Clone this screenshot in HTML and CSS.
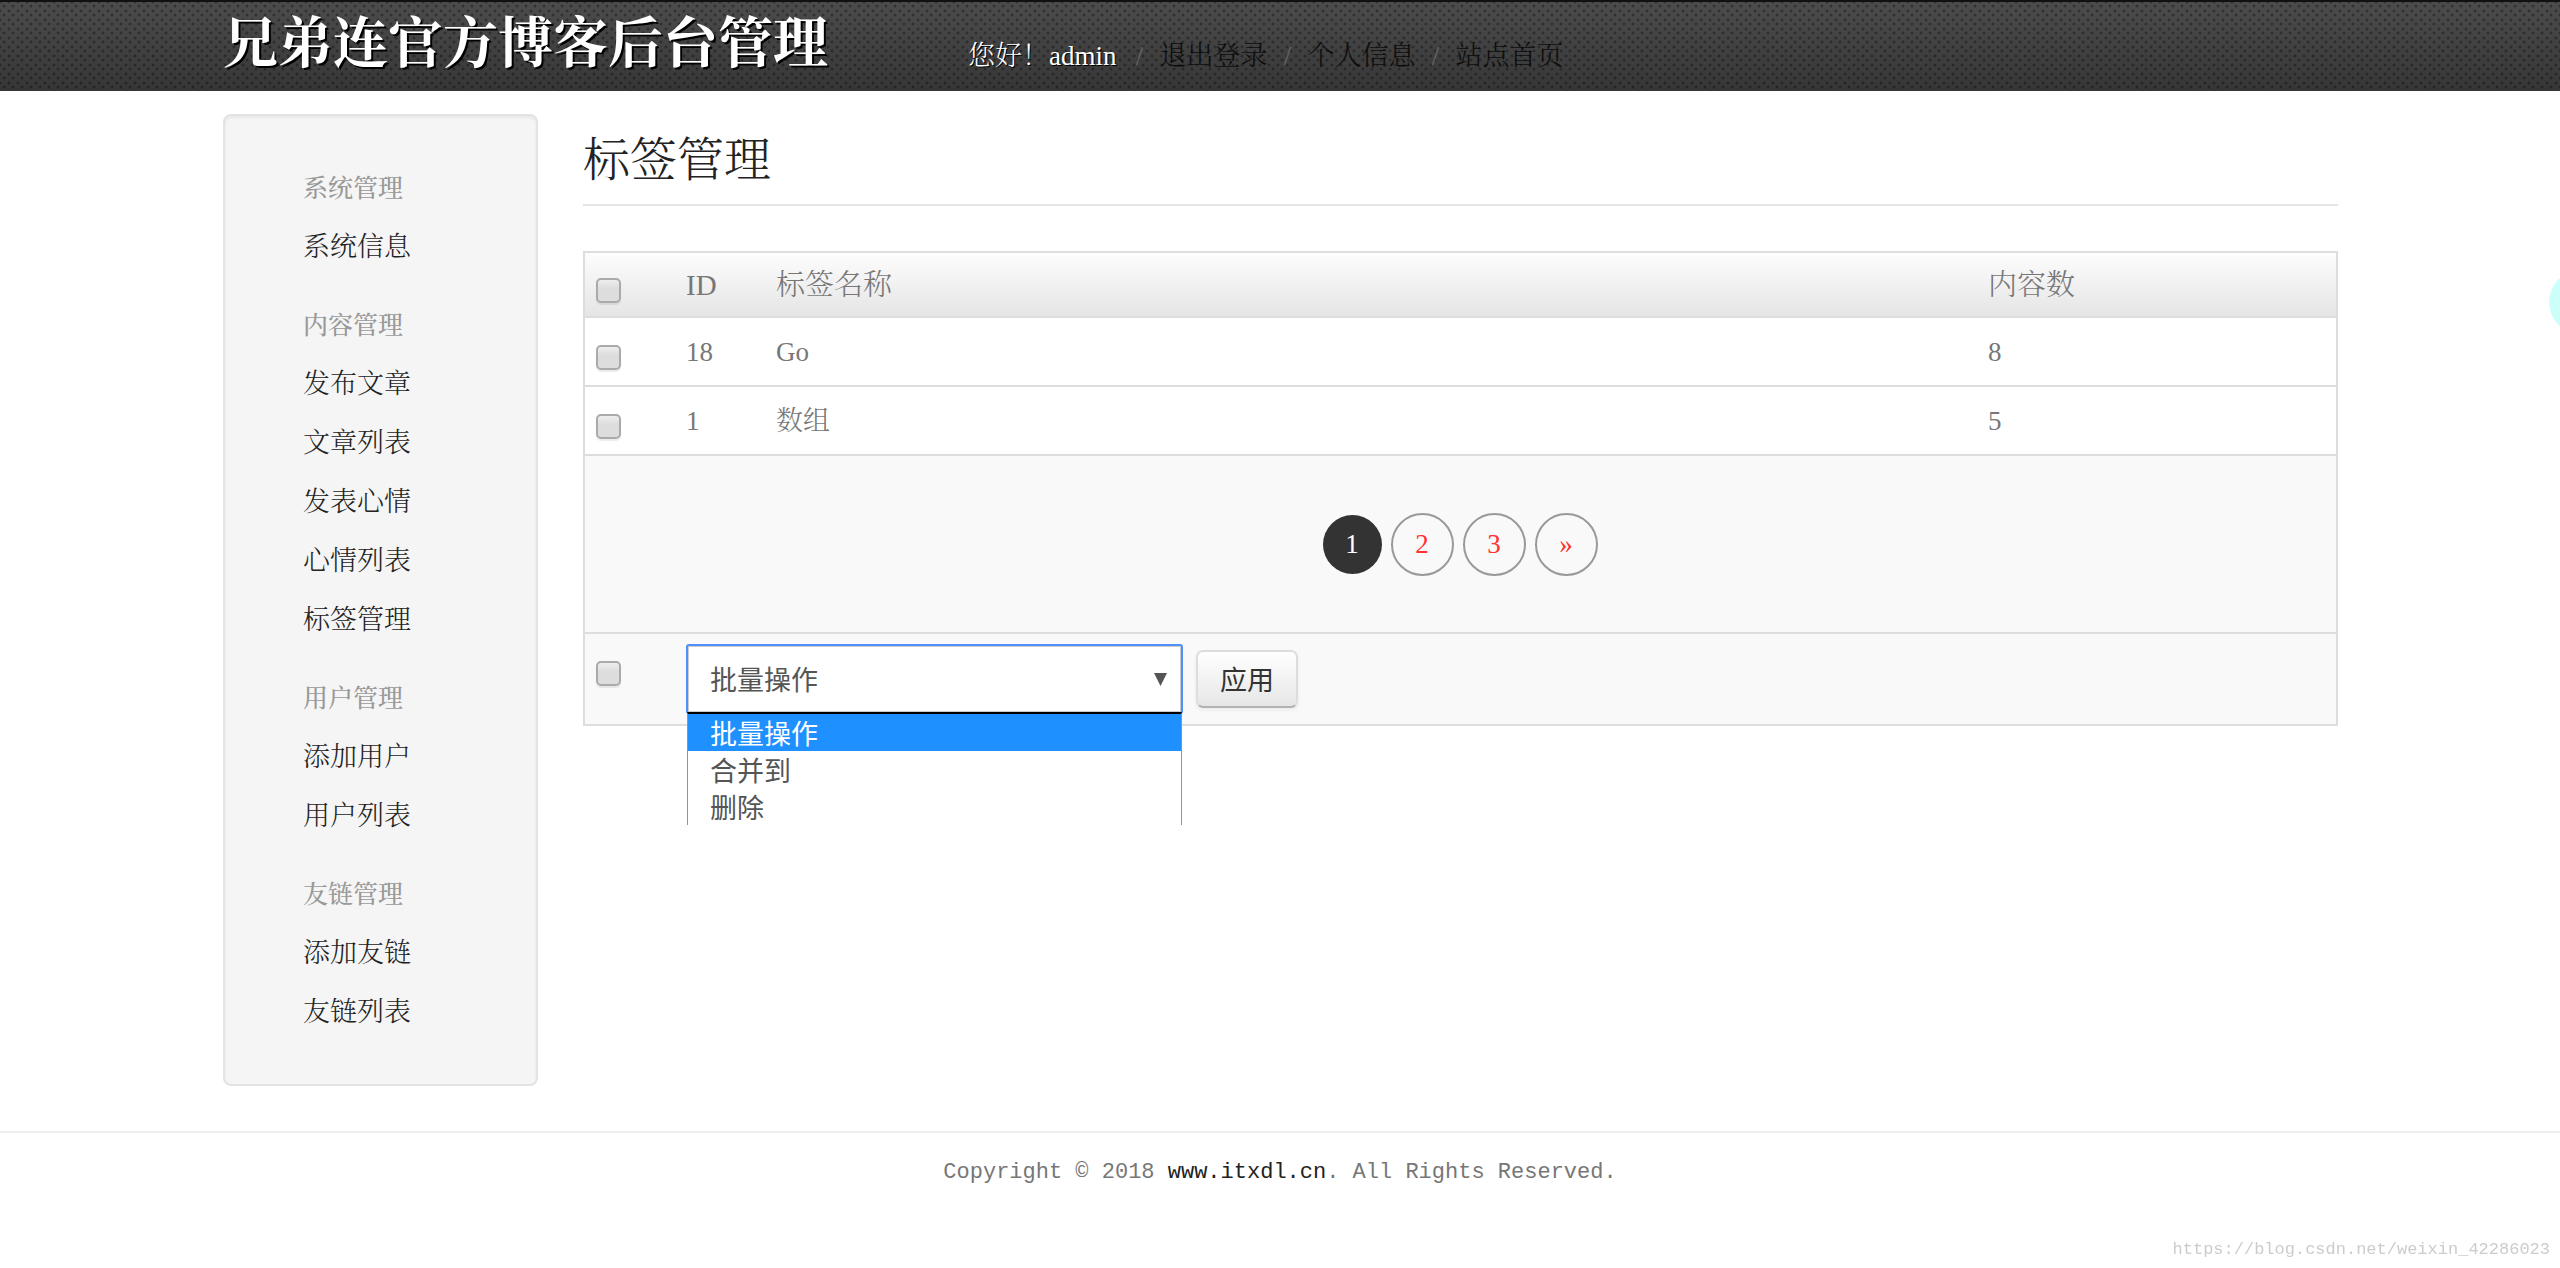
FILE: index.html
```html
<!DOCTYPE html>
<html lang="zh-CN">
<head>
<meta charset="utf-8">
<title>标签管理</title>
<link rel="stylesheet" href="styles.css">
</head>
<body>
<header class="topbar">
  <div class="container topbar-inner">
    <a class="brand" href="#">兄弟连官方博客后台管理</a>
    <ul class="user-nav">
      <li class="hello">您好！admin</li>
      <li><a href="#">退出登录</a></li>
      <li><a href="#">个人信息</a></li>
      <li><a href="#">站点首页</a></li>
    </ul>
  </div>
</header>

<div class="container layout">
  <nav class="sidebar">
    <h2>系统管理</h2>
    <ul>
      <li><a href="#">系统信息</a></li>
    </ul>
    <h2>内容管理</h2>
    <ul>
      <li><a href="#">发布文章</a></li>
      <li><a href="#">文章列表</a></li>
      <li><a href="#">发表心情</a></li>
      <li><a href="#">心情列表</a></li>
      <li><a href="#">标签管理</a></li>
    </ul>
    <h2>用户管理</h2>
    <ul>
      <li><a href="#">添加用户</a></li>
      <li><a href="#">用户列表</a></li>
    </ul>
    <h2>友链管理</h2>
    <ul>
      <li><a href="#">添加友链</a></li>
      <li><a href="#">友链列表</a></li>
    </ul>
  </nav>

  <main class="content">
    <h1>标签管理</h1>
    <table class="tags">
      <thead>
        <tr>
          <th class="col-check"><input type="checkbox" class="check" aria-label="全选"></th>
          <th class="col-id">ID</th>
          <th>标签名称</th>
          <th class="col-count">内容数</th>
        </tr>
      </thead>
      <tbody>
        <tr>
          <td><input type="checkbox" class="check" aria-label="选择 Go"></td>
          <td>18</td>
          <td>Go</td>
          <td>8</td>
        </tr>
        <tr>
          <td><input type="checkbox" class="check" aria-label="选择 数组"></td>
          <td>1</td>
          <td>数组</td>
          <td>5</td>
        </tr>
      </tbody>
      <tfoot>
        <tr class="pager-row">
          <td colspan="4">
            <div class="pager">
              <span class="page current">1</span>
              <a class="page" href="#">2</a>
              <a class="page" href="#">3</a>
              <a class="page" href="#">»</a>
            </div>
          </td>
        </tr>
        <tr class="bulk-row">
          <td><input type="checkbox" class="check" aria-label="全选"></td>
          <td colspan="3">
            <form class="bulk">
              <div class="picker">
                <select class="picker-select" aria-label="批量操作">
                  <option>批量操作</option>
                  <option>合并到</option>
                  <option>删除</option>
                </select>
                <ul class="picker-list">
                  <li class="active">批量操作</li>
                  <li>合并到</li>
                  <li>删除</li>
                </ul>
              </div>
              <button type="button" class="btn">应用</button>
            </form>
          </td>
        </tr>
      </tfoot>
    </table>
  </main>
</div>

<footer class="footer">
  <p>Copyright © 2018 <a href="#">www.itxdl.cn</a>. All Rights Reserved.</p>
</footer>

<div class="bubble"></div>
<div class="watermark">https://blog.csdn.net/weixin_42286023</div>
</body>
</html>
```
FILE: styles.css
```css
* { box-sizing: border-box; }

body {
  margin: 0;
  background: #fff;
  color: #777;
  font: 300 27px/36px "Liberation Serif", "Noto Serif CJK SC", "Noto Sans CJK SC", serif;
}

a { color: #222; text-decoration: none; }
ul { margin: 0; padding: 0; list-style: none; }

.container { margin: 0 222px 0 223px; }

/* top bar */
.topbar {
  border-top: 2px solid #111;
  background:
    radial-gradient(circle at 4px 4px, rgba(0, 0, 0, .5) 0, rgba(0, 0, 0, 0) 2px) 0 0 / 9px 9px,
    radial-gradient(circle at 4px 4px, rgba(0, 0, 0, .5) 0, rgba(0, 0, 0, 0) 2px) 5px 5px / 9px 9px,
    linear-gradient(#4c4c4c, #363636);
}
.topbar-inner { display: flex; gap: 140px; height: 89px; }
.brand {
  color: #fff;
  font-size: 55px;
  font-weight: 700;
  line-height: 84px;
  text-shadow: 2px 2px 0 #000;
}
.user-nav { display: flex; padding-top: 36px; }
.user-nav li + li::before { content: "/"; display: inline-block; width: 40px; color: #666; text-align: center; }
.user-nav a { color: #0c0c0c; }
.user-nav .hello { margin-right: 3px; color: #fff; text-shadow: 1px 1px 0 #000; }

/* page */
.layout { display: grid; grid-template-columns: 315px 1fr; gap: 45px; padding-top: 23px; }

.sidebar {
  padding: 44px 78px 42px;
  border: 2px solid #e3e3e3;
  border-radius: 8px;
  background: #f5f5f5;
  box-shadow: inset 0 2px 3px rgba(0, 0, 0, .06);
}
.sidebar h2 { margin: 0; color: #999; font-size: 25px; font-weight: 500; line-height: 58px; }
.sidebar ul + h2 { margin-top: 20px; }
.sidebar a { display: block; line-height: 59px; }

.content h1 {
  margin: 0 0 45px;
  padding-top: 2px;
  border-bottom: 2px solid #e5e5e5;
  color: #222;
  font-size: 47px;
  font-weight: 300;
  line-height: 88px;
}

/* table */
.tags {
  width: 100%;
  border: 2px solid #ddd;
  border-spacing: 0;
  table-layout: fixed;
}
.tags th, .tags td { padding: 8px 12px; text-align: left; vertical-align: middle; }
.tags th { height: 63px; background: linear-gradient(#fdfdfd, #e5e5e5); font-size: 29px; font-weight: 300; }
.tags td { height: 69px; border-top: 2px solid #ddd; }
.tags tfoot td { background: #f9f9f9; }
.tags tr > :first-child { padding-left: 11px; }
.tags .col-check { width: 89px; }
.col-id { width: 90px; }
.col-count { width: 360px; }

.check {
  appearance: none;
  display: block;
  width: 25px;
  height: 25px;
  margin: 12px 0 0;
  border: 2px solid #aaa;
  border-radius: 5px;
  background: linear-gradient(#eee, #ddd 40%);
  box-shadow: 0 2px 1px rgba(0, 0, 0, .08);
}

.tags .pager-row td { height: 178px; }
.pager { display: flex; justify-content: center; align-items: center; gap: 9px; }
.page {
  width: 63px;
  height: 63px;
  border: 2px solid #999;
  border-radius: 50%;
  color: #f33;
  line-height: 59px;
  text-align: center;
}
.page.current { width: 59px; height: 59px; border: 0; background: #333; color: #fff; }

.tags .bulk-row td { height: 92px; padding-top: 10px; vertical-align: top; }
.bulk-row .check { margin-top: 17px; }
.bulk { display: flex; align-items: center; gap: 13px; }
.picker { position: relative; width: 497px; }
.picker-select {
  appearance: none;
  display: block;
  width: 100%;
  height: 70px;
  padding: 0 22px;
  border: 2px solid #4d90fe;
  border-radius: 3px;
  background: #fff url("data:image/svg+xml,%3Csvg xmlns='http://www.w3.org/2000/svg' width='13' height='13'%3E%3Cpath d='M0 0h13L6.500 13z' fill='%23555'/%3E%3C/svg%3E") no-repeat right 14px center;
  box-shadow: inset 0 0 0 1px #ccc;
  color: #555;
  font: 400 27px/36px "Noto Sans CJK SC", sans-serif;
}
.picker-list {
  position: absolute;
  top: 68px;
  left: 1px;
  right: 1px;
  border: 1px solid #6f9ad3;
  border-top: 2px solid #000;
  border-bottom: 0;
  background: #fff;
  color: #555;
  font: 400 27px/37px "Noto Sans CJK SC", sans-serif;
}
.picker-list li { padding-left: 22px; }
.picker-list .active { background: #1e90ff; color: #fff; }
.btn {
  height: 58px;
  padding: 0 22px;
  border: 2px solid #ddd;
  border-bottom-color: #b3b3b3;
  border-radius: 7px;
  background: linear-gradient(#fff, #e6e6e6);
  box-shadow: 0 2px 4px rgba(0, 0, 0, .06);
  color: #333;
  font: 400 27px/36px "Noto Sans CJK SC", sans-serif;
}

/* footer */
.footer {
  margin-top: 45px;
  padding: 22px 0;
  border-top: 2px solid #eee;
  font: 400 22px/36px "Liberation Mono", monospace;
  text-align: center;
}
.footer p { margin: 0; }

.bubble {
  position: fixed;
  top: 270px;
  right: -53px;
  width: 64px;
  height: 64px;
  border-radius: 50%;
  background: #ccfff9;
}
.watermark {
  position: fixed;
  right: 10px;
  bottom: 6px;
  color: #ccc;
  font: 400 17px/24px "Liberation Mono", monospace;
}
```
